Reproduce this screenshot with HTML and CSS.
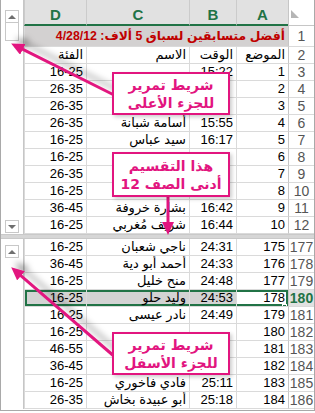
FILE: index.html
```html
<html>
  <head>
    <meta charset="utf-8">
    <link rel="stylesheet" href="styles.css">
  </head>
  <body>
    <div class="screen">
      <div class="window">
        <div class="pane pane-top">
          <div class="vscroll vscroll-top">
            <span class="sbtn up"></span>
            <span class="thumb"></span>
            <span class="spacer"></span>
            <span class="sbtn down"></span>
          </div>
          <div class="sheet">
            <div class="cell corner"><span class="selall"></span></div>
            <div class="cell ch">A</div>
            <div class="cell ch">B</div>
            <div class="cell ch">C</div>
            <div class="cell ch">D</div>

            <div class="cell rh">1</div>
            <div class="cell title">أفضل متسابقين لسباق 5 ألاف: 4/28/12</div>

            <div class="cell rh">2</div>
            <div class="cell">الموضع</div><div class="cell">الوقت</div><div class="cell">الاسم</div><div class="cell">الفئة</div>

            <div class="cell rh">3</div>
            <div class="cell">1</div><div class="cell">15:22</div><div class="cell"></div><div class="cell">16-25</div>

            <div class="cell rh">4</div>
            <div class="cell">2</div><div class="cell"></div><div class="cell"></div><div class="cell">26-35</div>

            <div class="cell rh">5</div>
            <div class="cell">3</div><div class="cell"></div><div class="cell"></div><div class="cell">26-35</div>

            <div class="cell rh">6</div>
            <div class="cell">4</div><div class="cell">15:55</div><div class="cell">أسامة شبانة</div><div class="cell">26-35</div>

            <div class="cell rh">7</div>
            <div class="cell">5</div><div class="cell">16:17</div><div class="cell">سيد عباس</div><div class="cell">16-25</div>

            <div class="cell rh">8</div>
            <div class="cell">6</div><div class="cell"></div><div class="cell"></div><div class="cell">16-25</div>

            <div class="cell rh">9</div>
            <div class="cell">7</div><div class="cell"></div><div class="cell"></div><div class="cell">26-35</div>

            <div class="cell rh">10</div>
            <div class="cell">8</div><div class="cell"></div><div class="cell"></div><div class="cell">16-25</div>

            <div class="cell rh">11</div>
            <div class="cell">9</div><div class="cell">16:42</div><div class="cell">بشارة خروفة</div><div class="cell">36-45</div>

            <div class="cell rh">12</div>
            <div class="cell">10</div><div class="cell">16:44</div><div class="cell">شريف مُغربي</div><div class="cell">16-25</div>
          </div>
        </div>

        <div class="splitbar"></div>

        <div class="pane pane-bottom">
          <div class="vscroll vscroll-bottom">
            <span class="sbtn up"></span>
          </div>
          <div class="sheet">
            <div class="cell rh">177</div>
            <div class="cell">175</div><div class="cell">24:31</div><div class="cell">ناجي شعبان</div><div class="cell">16-25</div>

            <div class="cell rh">178</div>
            <div class="cell">176</div><div class="cell">24:33</div><div class="cell">أحمد أبو دية</div><div class="cell">36-45</div>

            <div class="cell rh">179</div>
            <div class="cell">177</div><div class="cell">24:48</div><div class="cell">منح خليل</div><div class="cell">16-25</div>

            <div class="cell rh rh-active">180</div>
            <div class="cell sel sel-first">178<span class="handle"></span></div><div class="cell sel shade">24:53</div><div class="cell sel shade">وليد حلو</div><div class="cell sel sel-last shade">16-25</div>

            <div class="cell rh">181</div>
            <div class="cell">179</div><div class="cell">24:49</div><div class="cell">نادر عيسى</div><div class="cell">16-25</div>

            <div class="cell rh">182</div>
            <div class="cell">180</div><div class="cell"></div><div class="cell"></div><div class="cell">16-25</div>

            <div class="cell rh">183</div>
            <div class="cell">181</div><div class="cell"></div><div class="cell"></div><div class="cell">46-55</div>

            <div class="cell rh">184</div>
            <div class="cell">182</div><div class="cell"></div><div class="cell"></div><div class="cell">36-45</div>

            <div class="cell rh">185</div>
            <div class="cell">183</div><div class="cell">25:11</div><div class="cell">فادي فاخوري</div><div class="cell">16-25</div>

            <div class="cell rh">186</div>
            <div class="cell">184</div><div class="cell">25:18</div><div class="cell">أبو عبيدة بخاش</div><div class="cell">26-35</div>
          </div>
        </div>
      </div>

      <svg class="arrows" viewBox="0 0 315 413">
        <defs>
          <marker id="head" markerUnits="userSpaceOnUse" markerWidth="13" markerHeight="12" refX="6" refY="6" orient="auto">
            <path d="M0,0 L13,6 L0,12 z" fill="#e2157f"/>
          </marker>
          <filter id="shade" x="-30%" y="-30%" width="160%" height="160%">
            <feDropShadow dx="4" dy="-5" stdDeviation="3" flood-color="#000" flood-opacity="0.35"/>
          </filter>
        </defs>
        <g filter="url(#shade)">
          <line x1="118" y1="97" x2="17.4" y2="46.7" class="arrow"/>
          <line x1="115" y1="357" x2="16.5" y2="271.9" class="arrow"/>
        </g>
        <line x1="168" y1="196" x2="168" y2="228" class="arrow"/>
      </svg>

      <div class="callout callout-top">شريط تمرير<br>للجزء الأعلى</div>
      <div class="callout callout-mid">هذا التقسيم<br>أدنى الصف 12</div>
      <div class="callout callout-bottom">شريط تمرير<br>للجزء الأسفل</div>
    </div>
  </body>
</html>
```

FILE: styles.css
```css
:root {
  --grid-color: #dadada;
  --header-line: #c6c6c6;
  --excel-green: #217346;
  --callout-color: #e2157f;
  --title-red: #c00000;
}

* {
  box-sizing: border-box;
}

body {
  margin: 0;
  background: #fff;
  font-family: "Liberation Sans", "DejaVu Sans", sans-serif;
  color: #000;
}

.screen {
  position: relative;
  width: 315px;
  height: 413px;
  overflow: hidden;
}

.window {
  width: 315px;
  height: 411px;
  border: 1px solid #a9a9a9;
  border-top: 0;
  display: flex;
  flex-direction: column;
}

.pane {
  display: flex;
}

.pane-top {
  height: 234px;
}

.pane-bottom {
  height: 170px;
}

/* scroll bars sit on the left because the sheet is right-to-left */
.vscroll {
  width: 23px;
  border-right: 1px solid var(--header-line);
  display: flex;
  flex-direction: column;
  align-items: center;
}

.vscroll-top {
  padding: 10px 0 1px;
}

.vscroll-bottom {
  padding-top: 6px;
}

.sbtn {
  width: 14px;
  height: 13px;
  border: 1px solid #c8c8c8;
  display: flex;
  align-items: center;
  justify-content: center;
}

.sbtn::before {
  content: '';
  border-left: 4px solid transparent;
  border-right: 4px solid transparent;
}

.sbtn.up::before {
  border-bottom: 4px solid #6f6f6f;
}

.sbtn.down::before {
  border-top: 4px solid #6f6f6f;
}

.thumb {
  width: 14px;
  height: 18px;
  border: 1px solid #c8c8c8;
  border-top: 0;
}

.spacer {
  flex: 1;
}

.splitbar {
  height: 5px;
  background: #d6d6d6;
  border-top: 1px solid #c9c9c9;
  border-bottom: 1px solid #c9c9c9;
}

.sheet {
  direction: rtl;
  flex: 1;
  display: grid;
  grid-template-columns: 26px 52px 47px 103px 62px;
  grid-auto-rows: 17px;
}

.pane-top .sheet {
  grid-template-rows: 26px 21px;
}

.cell {
  border-left: 1px solid var(--grid-color);
  border-bottom: 1px solid var(--grid-color);
  font-size: 13px;
  line-height: 15px;
  padding: 0 3px 1px;
  display: flex;
  align-items: flex-end;
  white-space: nowrap;
  overflow: hidden;
}

.corner {
  border-left-color: var(--header-line);
  border-bottom-color: var(--header-line);
  align-items: center;
  justify-content: flex-end;
  padding: 2px 0 0 2px;
}

.selall {
  width: 0;
  height: 0;
  border-bottom: 8px solid #b5b5b5;
  border-right: 8px solid transparent;
}

.ch {
  background: #e1e1e1;
  color: var(--excel-green);
  font-weight: bold;
  font-size: 15px;
  justify-content: center;
  align-items: center;
  padding: 5px 0 0;
  border-left-color: #cbcbcb;
  border-bottom: 2px solid var(--excel-green);
}

.rh {
  direction: ltr;
  justify-content: center;
  align-items: center;
  padding: 0;
  font-size: 14px;
  color: #555;
  border-left-color: var(--header-line);
}

.rh-active {
  background: #e1e1e1;
  color: var(--excel-green);
  font-weight: bold;
}

.title {
  grid-column: span 4;
  background: #d3d1d1;
  color: var(--title-red);
  font-weight: bold;
  font-size: 12.3px;
  padding-bottom: 2px;
}

.shade {
  background: #d3d3d3;
}

.sel {
  position: relative;
  box-shadow: inset 0 2px var(--excel-green), inset 0 -2px var(--excel-green);
}

.sel-first {
  box-shadow: inset 0 2px var(--excel-green), inset 0 -2px var(--excel-green), inset -2px 0 var(--excel-green);
}

.sel-last {
  box-shadow: inset 0 2px var(--excel-green), inset 0 -2px var(--excel-green), inset 2px 0 var(--excel-green);
}

.handle {
  position: absolute;
  right: 1px;
  bottom: -3px;
  width: 5px;
  height: 5px;
  background: var(--excel-green);
  border: 1px solid #fff;
}

.arrows {
  position: absolute;
  top: 0;
  left: 0;
  width: 315px;
  height: 413px;
  pointer-events: none;
}

.arrow {
  stroke: var(--callout-color);
  stroke-width: 3;
  marker-end: url(#head);
}

.callout {
  position: absolute;
  left: 112px;
  width: 118px;
  direction: rtl;
  border: 2.5px solid var(--callout-color);
  background: #fff;
  color: var(--callout-color);
  font-family: "DejaVu Sans", sans-serif;
  font-weight: bold;
  font-size: 14px;
  line-height: 18px;
  text-align: center;
  display: flex;
  flex-direction: column;
  justify-content: center;
  box-shadow: 2px 2px 4px rgba(0, 0, 0, 0.2);
}

.callout-top {
  top: 72px;
  height: 43px;
}

.callout-mid {
  top: 152px;
  height: 45px;
}

.callout-bottom {
  top: 332px;
  height: 43px;
}
```
